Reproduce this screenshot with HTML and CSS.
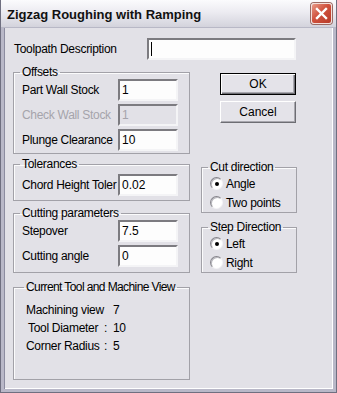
FILE: index.html
```html
<!DOCTYPE html>
<html lang="en">
<head>
    <meta charset="UTF-8">
    <title>Zigzag Roughing with Ramping</title>
    <link rel="stylesheet" href="styles.css">
</head>
<body>
  <div class="window">
    <!-- Title bar -->
    <div class="titlebar">
      <span class="title">Zigzag Roughing with Ramping</span>
      <div class="close">
        <svg width="13" height="13" viewBox="0 0 13 13"><path d="M2 2 L11 11 M11 2 L2 11" stroke="#fff" stroke-width="2.4" stroke-linecap="square"/></svg>
      </div>
    </div>

    <div class="client">
      <div class="desc-row">
        <label class="desc-label">Toolpath Description</label>
        <div class="field wide caret"></div>
      </div>

      <div class="main">
        <div class="left">
          <fieldset class="group offsets">
            <legend>Offsets</legend>
            <div class="row"><span class="lbl">Part Wall Stock</span><div class="field">1</div></div>
            <div class="row"><span class="lbl dim">Check Wall Stock</span><div class="field off">1</div></div>
            <div class="row"><span class="lbl">Plunge Clearance</span><div class="field">10</div></div>
          </fieldset>

          <fieldset class="group tolerances">
            <legend>Tolerances</legend>
            <div class="row"><span class="lbl">Chord Height Toler</span><div class="field">0.02</div></div>
          </fieldset>

          <fieldset class="group cutting">
            <legend>Cutting parameters</legend>
            <div class="row"><span class="lbl">Stepover</span><div class="field">7.5</div></div>
            <div class="row"><span class="lbl">Cutting angle</span><div class="field">0</div></div>
          </fieldset>

          <fieldset class="group current">
            <legend>Current Tool and Machine View</legend>
            <div class="info">
              <span>Machining view</span><span></span><span>7</span>
              <span class="ind">Tool Diameter</span><span>:</span><span>10</span>
              <span>Corner Radius</span><span>:</span><span>5</span>
            </div>
          </fieldset>
        </div>

        <div class="right">
          <div class="btn default">OK</div>
          <div class="btn">Cancel</div>

          <fieldset class="group radios cutdir">
            <legend>Cut direction</legend>
            <div class="radio"><span class="dot on"></span>Angle</div>
            <div class="radio"><span class="dot"></span>Two points</div>
          </fieldset>

          <fieldset class="group radios stepdir">
            <legend>Step Direction</legend>
            <div class="radio"><span class="dot on"></span>Left</div>
            <div class="radio"><span class="dot"></span>Right</div>
          </fieldset>
        </div>
      </div>
    </div>
  </div>
</body>
</html>
```

FILE: styles.css
```css
body { margin: 0; background: #e2e1e7; font-family: "Liberation Sans", Arial, sans-serif; font-size: 12px; letter-spacing: -0.3px; color: #000; }
.window { width: 337px; height: 393px; box-sizing: border-box; background: #e2e1e7; border: 1px solid #6f6f80; border-top: none; display: flex; flex-direction: column; }
.titlebar { height: 28px; flex: none; display: flex; align-items: center; padding: 0 4px 0 6px; background: linear-gradient(#fbfbfd, #ecebf1 45%, #d3d3dc); border-bottom: 1px solid #b8b8c6; box-sizing: border-box; }
.title { font-weight: bold; font-size: 13px; letter-spacing: 0; color: #111; flex: 1; margin-top: 2px; }
.close { width: 21px; height: 21px; box-sizing: border-box; border: 1px solid #f4e0dc; border-radius: 3px; background: linear-gradient(135deg, #e89a88, #d0523e 45%, #b83a28); display: flex; align-items: center; justify-content: center; box-shadow: 0 0 0 1px #9c6a64; }
.client { flex: 1; padding: 10px 0 0 9px; border-left: 3px solid #b9b8c8; border-right: 3px solid #b9b8c8; border-bottom: 3px solid #b9b8c8; box-shadow: inset 1px 0 #8c8ca0, inset -1px 0 #fff, inset 0 -1px #fff; }
.desc-row { display: flex; align-items: center; height: 22px; }
.desc-label { width: 133px; padding-left: 1px; }

.field { width: 60px; height: 22px; flex: none; box-sizing: border-box; background: #fdfdfd; border: 2px solid; border-color: #7c7b80 #f4f4f6 #f4f4f6 #7c7b80; padding: 2px 0 0 2px; line-height: 14px; letter-spacing: 0; }
.field.wide { width: 149px; }
.field.caret { position: relative; }
.field.caret::after { content: ""; position: absolute; left: 2px; top: 2px; width: 1px; height: 14px; background: #000; }
.field.off { background: #e2e1e7; color: #a5a4ab; }

.main { display: flex; align-items: flex-start; margin-top: 5px; }
.left { width: 177px; flex: none; display: flex; flex-direction: column; }
.right { margin-left: 11px; width: 96px; flex: none; display: flex; flex-direction: column; }

.group { flex: none; margin: 0; border: 1px solid #a2a1a8; box-shadow: 1px 1px 0 #fbfbfc inset; padding: 0 0 0 8px; min-width: 0; }
.group legend { padding: 0 2px; line-height: 14px; margin-left: -2px; white-space: nowrap; }
.offsets { padding-bottom: 2px; }
.tolerances { margin-top: 3px; padding-top: 3px; padding-bottom: 4px; }
.cutting { margin-top: 5px; padding-bottom: 5px; }
.current { margin-top: 7px; width: 177px; height: 100px; box-sizing: border-box; padding: 7px 0 0 12px; }
.current legend { letter-spacing: -0.6px; }

.row { display: flex; align-items: center; height: 22px; margin-bottom: 3px; }
.row:last-child { margin-bottom: 0; }
.lbl { width: 96px; flex: none; white-space: nowrap; }
.lbl.dim { color: #a5a4ab; }

.info { display: grid; grid-template-columns: 78px 9px auto; grid-auto-rows: 18px; align-items: center; }
.info .ind { padding-left: 2px; }

.btn { width: 76px; height: 22px; margin-left: 19px; box-sizing: border-box; display: flex; align-items: center; justify-content: center; background: #e4e3e9; border: 1px solid; border-color: #fff #6d6d73 #6d6d73 #fff; box-shadow: inset -1px -1px #a8a7ae; letter-spacing: 0; }
.btn.default { margin-top: 8px; border: 1px solid #000; box-shadow: inset 1px 1px #fff, inset -1px -1px #6d6d73, inset -2px -2px #a8a7ae; }
.btn + .btn { margin-top: 6px; }

.radios { padding: 0 0 0 8px; }
.cutdir { margin-top: 37px; }
.stepdir { margin-top: 7px; }
.radio { display: flex; align-items: center; height: 19px; }
.dot { width: 13px; height: 13px; flex: none; box-sizing: border-box; border-radius: 50%; background: #fff; border: 1px solid; border-color: #85848b #f4f4f6 #f4f4f6 #85848b; margin-right: 3px; display: flex; align-items: center; justify-content: center; box-shadow: inset 1px 1px #b9b8be; }
.dot.on::after { content: ""; width: 4px; height: 4px; border-radius: 50%; background: #000; }
```
